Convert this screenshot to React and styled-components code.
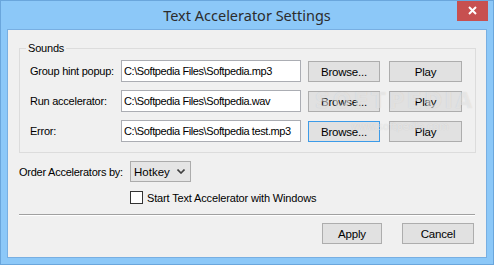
import React from 'react';
import styled, { createGlobalStyle } from 'styled-components';

const GlobalStyle = createGlobalStyle`
	html, body {
		margin: 0;
		padding: 0;
		background: #8cc8f8;
	}
	* {
		box-sizing: border-box;
	}
`;

const Window = styled.div`
	position: relative;
	width: 494px;
	height: 265px;
	display: flex;
	flex-direction: column;
	background: #8cc8f8;
	border: 1px solid #6aa6dc;
	font-family: 'Liberation Sans', Arial, sans-serif;
	font-size: 11px;
	color: #000;
	overflow: hidden;
`;

const TitleBar = styled.div`
	position: relative;
	height: 28px;
	display: flex;
	align-items: center;
	justify-content: center;
	font-family: 'Noto Sans', 'Open Sans', sans-serif;
	font-size: 14.5px;
	color: #2c2c2c;
`;

const CloseButton = styled.div`
	position: absolute;
	top: -1px;
	right: 5px;
	width: 31px;
	height: 21px;
	background: #c75050;
	display: flex;
	align-items: center;
	justify-content: center;
`;

const Client = styled.div`
	flex: 1;
	margin: 0 6px 6px;
	border: 1px solid #78afe2;
	background: #f0f0f0;
	padding: 18px 10px 12px 11px;
	display: flex;
	flex-direction: column;
`;

const Group = styled.div`
	position: relative;
	border: 1px solid #dcdcdc;
	padding: 11px 10px 10px;
	display: flex;
	flex-direction: column;
	gap: 8px;
`;

const Caption = styled.span`
	position: absolute;
	top: -7px;
	left: 6px;
	padding: 0 2px;
	background: #f0f0f0;
	line-height: 13px;
	letter-spacing: -0.2px;
`;

const Row = styled.div`
	display: flex;
	align-items: center;
	height: 22px;
`;

const Label = styled.span`
	width: ${(p) => p.$width || 91}px;
	flex-shrink: 0;
	white-space: nowrap;
	letter-spacing: -0.25px;
`;

const TextBox = styled.input`
	width: 180px;
	height: 22px;
	border: 1px solid #abadb3;
	background: #fff;
	padding: 0 2px;
	font: inherit;
	letter-spacing: -0.4px;
	color: #000;
	outline: none;
`;

const Button = styled.div`
	width: ${(p) => p.$width || 72}px;
	height: 21px;
	margin-left: ${(p) => p.$gap || 0}px;
	margin-top: ${(p) => p.$shift || 0}px;
	display: flex;
	align-items: center;
	justify-content: center;
	background: #e1e1e1;
	border: 1px solid ${(p) => (p.$focused ? '#3c9be8' : '#adadad')};
	font-size: 11.5px;
	letter-spacing: -0.2px;
`;

const OrderRow = styled.div`
	display: flex;
	align-items: center;
	margin-top: 8px;
	height: 21px;
`;

const Combo = styled.div`
	width: 61px;
	height: 21px;
	display: flex;
	align-items: center;
	justify-content: space-between;
	padding: 0 5px 0 3px;
	background: #e5e5e5;
	border: 1px solid #acacac;
	font-size: 11.5px;
`;

const CheckRow = styled.label`
	display: flex;
	align-items: center;
	gap: 4px;
	margin: 9px 0 0 111px;
	height: 13px;
	letter-spacing: -0.15px;
`;

const CheckBox = styled.span`
	width: 13px;
	height: 13px;
	background: #fff;
	border: 1px solid #333;
`;

const Separator = styled.div`
	margin-top: 10px;
	margin-right: 1px;
	border-top: 1px solid #a0a0a0;
	border-bottom: 1px solid #fff;
`;

const Footer = styled.div`
	display: flex;
	justify-content: flex-end;
	gap: 20px;
	margin-top: 7px;
	padding-right: 2px;
`;

const Watermark = styled.div`
	position: absolute;
	left: 314px;
	top: 88px;
	pointer-events: none;
	font-family: 'DejaVu Sans', sans-serif;
	color: rgba(255, 255, 255, 0.45);
	text-shadow: 0 0 1px rgba(140, 140, 140, 0.3);

	& .big {
		font-size: 21px;
		font-weight: bold;
		letter-spacing: 3px;
	}
	& .small {
		margin: 8px 0 0 36px;
		font-size: 10px;
	}
`;

const sounds = [
	{ label: 'Group hint popup:', file: 'C:\\Softpedia Files\\Softpedia.mp3' },
	{ label: 'Run accelerator:', file: 'C:\\Softpedia Files\\Softpedia.wav' },
	{ label: 'Error:', file: 'C:\\Softpedia Files\\Softpedia test.mp3', focused: true },
];

const Chevron = () => (
	<svg width="8" height="5" viewBox="0 0 8 5">
		<path d="M0.5 0.5 L4 4 L7.5 0.5" fill="none" stroke="#404040" strokeWidth="1.6" />
	</svg>
);

export default function App() {
	return (
		<>
			<GlobalStyle />
			<Window>
				<TitleBar>
					Text Accelerator Settings
					<CloseButton>
						<svg width="9" height="9" viewBox="0 0 9 9">
							<path d="M1 1 L8 8 M8 1 L1 8" stroke="#fff" strokeWidth="2" />
						</svg>
					</CloseButton>
				</TitleBar>
				<Client>
					<Group>
						<Caption>Sounds</Caption>
						{sounds.map((s) => (
							<Row key={s.label}>
								<Label>{s.label}</Label>
								<TextBox readOnly value={s.file} />
								<Button $gap={7} $shift={1} $focused={s.focused}>
									Browse...
								</Button>
								<Button $gap={9} $shift={1} $width={73}>
									Play
								</Button>
							</Row>
						))}
					</Group>
					<OrderRow>
						<Label $width={111}>Order Accelerators by:</Label>
						<Combo>
							Hotkey
							<Chevron />
						</Combo>
					</OrderRow>
					<CheckRow>
						<CheckBox />
						Start Text Accelerator with Windows
					</CheckRow>
					<Separator />
					<Footer>
						<Button $width={60}>Apply</Button>
						<Button $width={72}>Cancel</Button>
					</Footer>
				</Client>
				<Watermark>
					<div className="big">SOFTPEDIA</div>
					<div className="small">www.softpedia.com</div>
				</Watermark>
			</Window>
		</>
	);
}
